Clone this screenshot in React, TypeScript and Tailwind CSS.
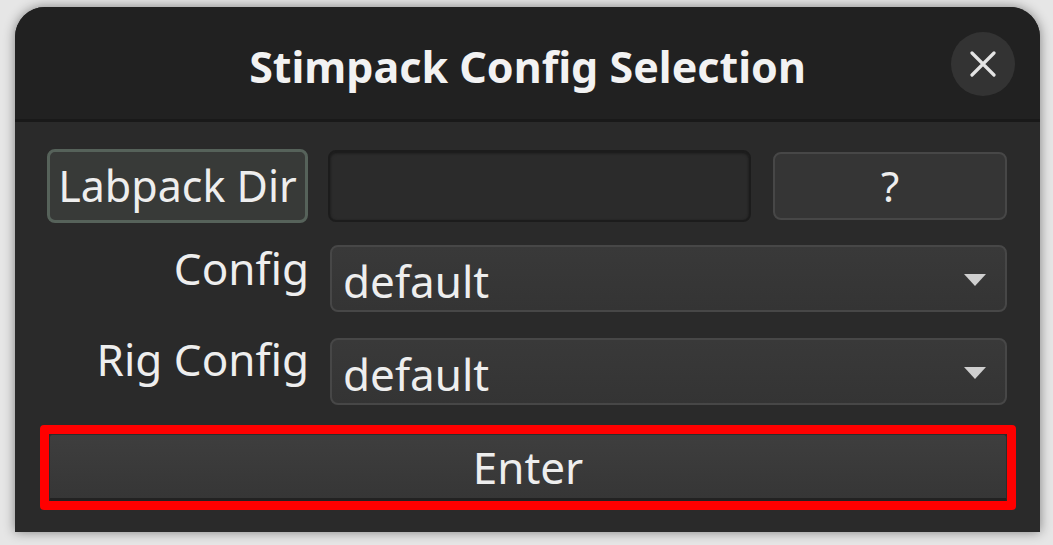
import React from "react";

function Combo({ value }: { value: string }) {
  return (
    <div className="col-span-2 h-[67px] rounded-[8px] border-2 border-[#474747] bg-gradient-to-b from-[#393939] to-[#343434] flex items-center pl-[11px] pr-[18px]">
      <span className="flex-1 text-[44px] text-[#eeeeee] leading-[60px] mt-[4px]">{value}</span>
      <svg width="24" height="14" viewBox="0 0 24 14" className="mt-[2px]">
        <polygon points="1,1 23,1 12,13" fill="#cfcfcf" />
      </svg>
    </div>
  );
}

export default function App() {
  return (
    <div
      className="w-[1053px] h-[545px] overflow-hidden bg-[#e6e6e6] pt-[7px] pl-[15px]"
      style={{ fontFamily: '"Noto Sans", "DejaVu Sans", sans-serif' }}
    >
      <div className="w-[1025px] h-[525px] rounded-t-[30px] bg-[#2a2a2a] shadow-[0_0_12px_rgba(0,0,0,0.45)] flex flex-col overflow-hidden">
        <header className="h-[115px] shrink-0 bg-[#212121] border-b-[3px] border-[#191919] grid grid-cols-[1fr_auto_1fr] items-center">
          <div />
          <div className="text-[43px] font-bold text-[#f2f2f2] leading-[58px] mt-[8px]">
            Stimpack Config Selection
          </div>
          <div className="flex justify-end pr-[25px]">
            <div className="w-[64px] h-[64px] rounded-full bg-[#333333] flex items-center justify-center mt-[2px]">
              <svg width="26" height="26" viewBox="0 0 26 26">
                <path d="M2 2 L24 24 M24 2 L2 24" stroke="#e4e4e4" strokeWidth="3.2" strokeLinecap="round" />
              </svg>
            </div>
          </div>
        </header>

        <div className="flex-1 px-[32px] pt-[27px] flex flex-col">
          <div className="grid grid-cols-[261px_421px_234px] gap-x-[22px] items-center">
            <div className="h-[74px] rounded-[8px] border-[3px] border-[#56625a] bg-[#383a38] flex items-center justify-center text-[43px] text-[#eeeeee] leading-[56px]">
              Labpack Dir
            </div>
            <div className="h-[72px] -ml-[2px] rounded-[8px] border-2 border-[#1c1c1c] bg-[#2b2b2b] shadow-[inset_0_1px_3px_rgba(0,0,0,0.5)]" />
            <div className="h-[68px] rounded-[8px] border-2 border-[#474747] bg-[#353535] flex items-center justify-center text-[42px] text-[#eeeeee] leading-[56px]">
              ?
            </div>
          </div>

          <div className="grid grid-cols-[261px_421px_234px] gap-x-[22px] mt-[22px]">
            <div className="text-right text-[44px] text-[#eeeeee] leading-[48px] -mt-[1px] -mr-[1px]">Config</div>
            <Combo value="default" />
          </div>

          <div className="grid grid-cols-[261px_421px_234px] gap-x-[22px] mt-[26px]">
            <div className="text-right text-[44px] text-[#eeeeee] leading-[48px] -mt-[3px] -mr-[1px]">Rig Config</div>
            <Combo value="default" />
          </div>

          <div className="mt-[20px] -ml-[7px] -mr-[8px] border-[9px] border-[#ff0000] rounded-[4px]">
            <div className="h-[67px] rounded-[3px] border border-[#2c2c2c] border-b-[3px] border-b-[#222222] bg-gradient-to-b from-[#3e3e3e] to-[#363636] flex items-center justify-center text-[44px] text-[#eeeeee] leading-[58px]">
              Enter
            </div>
          </div>
        </div>
      </div>
    </div>
  );
}
